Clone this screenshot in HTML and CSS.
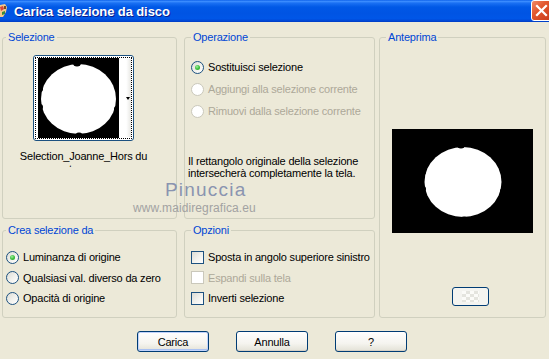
FILE: index.html
```html
<!DOCTYPE html>
<html lang="it">
<head>
    <meta charset="UTF-8">
    <title>Carica selezione da disco</title>
    <link rel="stylesheet" href="styles.css">
</head>
<body>
<div class="window">

    <!-- Barra del titolo -->
    <div class="titlebar">
        <svg class="app-icon" width="8" height="16" viewBox="0 0 8 16">
            <path d="M0 2 L5 1 L7 4 L6 9 L3 14 L0 14 Z" fill="#f3c98b"/>
            <path d="M0 4 L3 3 L4 6 L1 8 Z" fill="#d9443a"/>
            <path d="M2 9 L5 8 L5 11 L2 12 Z" fill="#3a8a3a"/>
            <path d="M4 3 L6 3 L6 6 L4 6 Z" fill="#7a4a20"/>
        </svg>
        <span class="title">Carica selezione da disco</span>
        <div class="close">
            <svg width="21" height="21" viewBox="0 0 21 21">
                <path d="M6 6 L15 15 M15 6 L6 15" stroke="#fff" stroke-width="2.2" stroke-linecap="square"/>
            </svg>
        </div>
    </div>

    <div class="content">
        <div class="groups">

            <!-- Selezione -->
            <fieldset class="group g-sel">
                <legend>Selezione</legend>
                <div class="sel-col">
                    <div class="thumb">
                        <div class="thumb-inner">
                            <svg width="81" height="80" viewBox="0 0 81 80">
                                <rect width="81" height="80" fill="#000"/>
                                <ellipse cx="40.5" cy="41" rx="37.5" ry="35" fill="#fff"/>
                                <circle cx="39" cy="4" r="4.5" fill="#000"/>
                                <circle cx="41" cy="79" r="4.5" fill="#000"/>
                                <circle cx="2" cy="31" r="3" fill="#000"/>
                                <circle cx="2" cy="49" r="3" fill="#000"/>
                                <circle cx="79" cy="28" r="3" fill="#000"/>
                                <circle cx="79" cy="51" r="3" fill="#000"/>
                            </svg>
                            <div class="thumb-strip"><span class="arrow"></span></div>
                        </div>
                    </div>
                    <div class="thumb-label">Selection_Joanne_Hors du temps</div>
                </div>
            </fieldset>

            <!-- Operazione -->
            <fieldset class="group g-op">
                <legend>Operazione</legend>
                <div class="opt-list op-list">
                    <div class="opt"><span class="radio checked"></span>Sostituisci selezione</div>
                    <div class="opt disabled"><span class="radio"></span>Aggiungi alla selezione corrente</div>
                    <div class="opt disabled"><span class="radio"></span>Rimuovi dalla selezione corrente</div>
                </div>
                <p class="note">Il rettangolo originale della selezione intersecherà completamente la tela.</p>
            </fieldset>

            <!-- Anteprima -->
            <fieldset class="group g-prev">
                <legend>Anteprima</legend>
                <svg class="preview" width="141" height="104" viewBox="0 0 141 104">
                    <rect width="141" height="104" fill="#000"/>
                    <ellipse cx="71" cy="53" rx="38.5" ry="35" fill="#fff"/>
                    <circle cx="69" cy="15" r="4.5" fill="#000"/>
                    <circle cx="72" cy="92" r="4.5" fill="#000"/>
                    <circle cx="31" cy="43" r="3" fill="#000"/>
                    <circle cx="31" cy="60" r="3" fill="#000"/>
                    <circle cx="111" cy="40" r="3" fill="#000"/>
                    <circle cx="111" cy="62" r="3" fill="#000"/>
                </svg>
                <div class="bg-btn"><span class="checker"></span></div>
            </fieldset>

            <!-- Crea selezione da -->
            <fieldset class="group g-crea">
                <legend>Crea selezione da</legend>
                <div class="opt-list crea-list">
                    <div class="opt"><span class="radio checked"></span>Luminanza di origine</div>
                    <div class="opt"><span class="radio"></span>Qualsiasi val. diverso da zero</div>
                    <div class="opt"><span class="radio"></span>Opacità di origine</div>
                </div>
            </fieldset>

            <!-- Opzioni -->
            <fieldset class="group g-opz">
                <legend>Opzioni</legend>
                <div class="opt-list opz-list">
                    <div class="opt"><span class="check"></span>Sposta in angolo superiore sinistro</div>
                    <div class="opt disabled"><span class="check"></span>Espandi sulla tela</div>
                    <div class="opt"><span class="check"></span>Inverti selezione</div>
                </div>
            </fieldset>
        </div>

        <div class="buttons">
            <button class="btn default">Carica</button>
            <button class="btn">Annulla</button>
            <button class="btn">?</button>
        </div>
    </div>

    <!-- Filigrana -->
    <div class="watermark">
        <div class="wm-name">Pinuccia</div>
        <div class="wm-site">www.maidiregrafica.eu</div>
    </div>
</div>
</body>
</html>
```

FILE: styles.css
```css
html, body {
    margin: 0;
    padding: 0;
}
body {
    background: #ece9d8;
    font-family: "Liberation Sans", Arial, sans-serif;
    font-size: 11px;
    letter-spacing: -0.2px;
    color: #000;
    overflow: hidden;
}
.window {
    position: relative;
    width: 549px;
    height: 359px;
}

/* barra del titolo */
.titlebar {
    height: 22px;
    display: flex;
    align-items: center;
    background: linear-gradient(to bottom, #0a5fe9 0%, #3d8eff 6%, #1a70f3 14%, #0058e6 32%, #0054e3 60%, #0056e7 84%, #0048d6 94%, #003cc2 100%);
}
.app-icon {
    flex: none;
}
.title {
    margin-left: 6px;
    color: #fff;
    font-weight: bold;
    font-size: 13px;
    letter-spacing: -0.1px;
    text-shadow: 1px 1px 0 #0a1e8c;
}
.close {
    margin-left: auto;
    margin-right: -3px;
    width: 21px;
    height: 21px;
    box-sizing: border-box;
    border: 1px solid #fff;
    border-radius: 3px;
    background: linear-gradient(135deg, #f08a68 0%, #e2582f 40%, #c93b1a 100%);
    align-self: flex-start;
}
.close svg {
    display: block;
    margin: -1px;
}

/* gruppi */
.groups {
    display: grid;
    grid-template-columns: 175px 198px 171px;
    grid-template-rows: 188px 94px;
    row-gap: 5px;
    margin: 9px 0 0 2px;
}
.group {
    margin: 0;
    padding: 0;
    min-width: 0;
    border: 1px solid #d0d0bf;
    border-radius: 3px;
    box-sizing: border-box;
}
.group legend {
    padding: 0 2px;
    margin-left: 6px;
    line-height: 13px;
    color: #0046d5;
}
.g-sel, .g-crea {
    grid-column: 1;
}
.g-sel legend, .g-crea legend {
    margin-left: 3px;
}
.g-sel { grid-row: 1; }
.g-crea { grid-row: 2; }
.g-op {
    grid-column: 2;
    grid-row: 1;
    margin-left: 7px;
}
.g-opz {
    grid-column: 2;
    grid-row: 2;
    margin-left: 7px;
}
.g-prev {
    grid-column: 3;
    grid-row: 1 / 3;
    margin-left: 4px;
    display: flex;
    flex-direction: column;
}

/* selezione */
.sel-col {
    width: 161px;
    display: flex;
    flex-direction: column;
    align-items: center;
}
.thumb {
    margin-top: 11px;
    width: 101px;
    height: 86px;
    box-sizing: border-box;
    border: 1px solid #1c5180;
    border-radius: 3px;
    background: #fff;
    padding: 1px;
}
.thumb-inner {
    height: 100%;
    box-sizing: border-box;
    border: 1px dotted #000;
    display: flex;
    align-items: center;
    padding-left: 2px;
}
.thumb-inner svg {
    display: block;
}
.thumb-strip {
    flex: 1;
    align-self: stretch;
    margin: 1px 0;
    background: linear-gradient(to right, #fff 60%, #e8e8e4);
    display: flex;
    align-items: center;
    justify-content: flex-end;
    padding-right: 1px;
}
.arrow {
    width: 0;
    height: 0;
    border-left: 2px solid transparent;
    border-right: 2px solid transparent;
    border-top: 3px solid #000;
}
.thumb-label {
    margin-top: 9px;
    width: 140px;
    height: 17px;
    overflow: hidden;
    text-align: center;
    line-height: 13px;
}

/* opzioni, radio e caselle */
.opt-list {
    padding-left: 6px;
}
.op-list {
    padding-top: 12px;
}
.crea-list, .opz-list {
    padding-top: 10px;
    padding-left: 3px;
}
.opz-list {
    padding-left: 6px;
}
.opt {
    display: flex;
    align-items: center;
    gap: 4px;
    height: 22px;
    white-space: nowrap;
}
.crea-list .opt, .opz-list .opt {
    height: 20.5px;
}
.opt.disabled {
    color: #aca899;
}
.radio {
    flex: none;
    position: relative;
    width: 13px;
    height: 13px;
    box-sizing: border-box;
    border: 1px solid #1c5180;
    border-radius: 50%;
    background: linear-gradient(135deg, #dcdcd5 0%, #f2f2ee 55%, #fff 100%);
}
.radio.checked::after {
    content: "";
    position: absolute;
    left: 3px;
    top: 3px;
    width: 5px;
    height: 5px;
    border-radius: 50%;
    background: radial-gradient(circle at 40% 35%, #9ef09e 0%, #3fbf3f 50%, #21a121 100%);
}
.disabled .radio, .disabled .check {
    border-color: #cac8bb;
    background: #fff;
}
.check {
    flex: none;
    width: 13px;
    height: 13px;
    box-sizing: border-box;
    border: 1px solid #1c5180;
    background: linear-gradient(135deg, #dcdcd5 0%, #f2f2ee 55%, #fff 100%);
}
.note {
    margin: 33px 0 0 3px;
    line-height: 12px;
}

/* anteprima */
.preview {
    display: block;
    margin: 85px auto 0;
}
.bg-btn {
    margin: 54px 0 0 72px;
    width: 37px;
    height: 19px;
    box-sizing: border-box;
    border: 1px solid #003c74;
    border-radius: 3px;
    background: #f4f4f0;
    display: flex;
    align-items: center;
    justify-content: center;
}
.checker {
    width: 17px;
    height: 11px;
    background: conic-gradient(#e4e4de 25%, #fbfbf8 0 50%, #e4e4de 0 75%, #fbfbf8 0);
    background-size: 8px 6px;
}

/* pulsanti */
.buttons {
    display: flex;
    gap: 27px;
    padding-left: 137px;
    margin-top: 13px;
}
.btn {
    width: 72px;
    height: 21px;
    padding: 0;
    font-family: inherit;
    font-size: 11px;
    letter-spacing: inherit;
    color: #000;
    border: 1px solid #003c74;
    border-radius: 3px;
    background: linear-gradient(to bottom, #fff 0%, #f5f4ef 60%, #e3e1d6 100%);
    box-shadow: inset 0 -1px 0 #d6d0c5;
}
.btn.default {
    box-shadow: inset 0 0 0 1px #c1d3fb, inset 0 -2px 0 #a9c1f2;
}

/* filigrana */
.watermark {
    position: absolute;
    left: 133px;
    top: 180px;
    width: 124px;
}
.wm-name {
    padding-left: 32px;
    font-size: 19px;
    letter-spacing: 1.2px;
    color: #8a94b0;
    line-height: 19px;
}
.wm-site {
    margin-top: 3px;
    font-size: 12px;
    letter-spacing: 0.1px;
    color: #a2a2a2;
    line-height: 12px;
}
```
